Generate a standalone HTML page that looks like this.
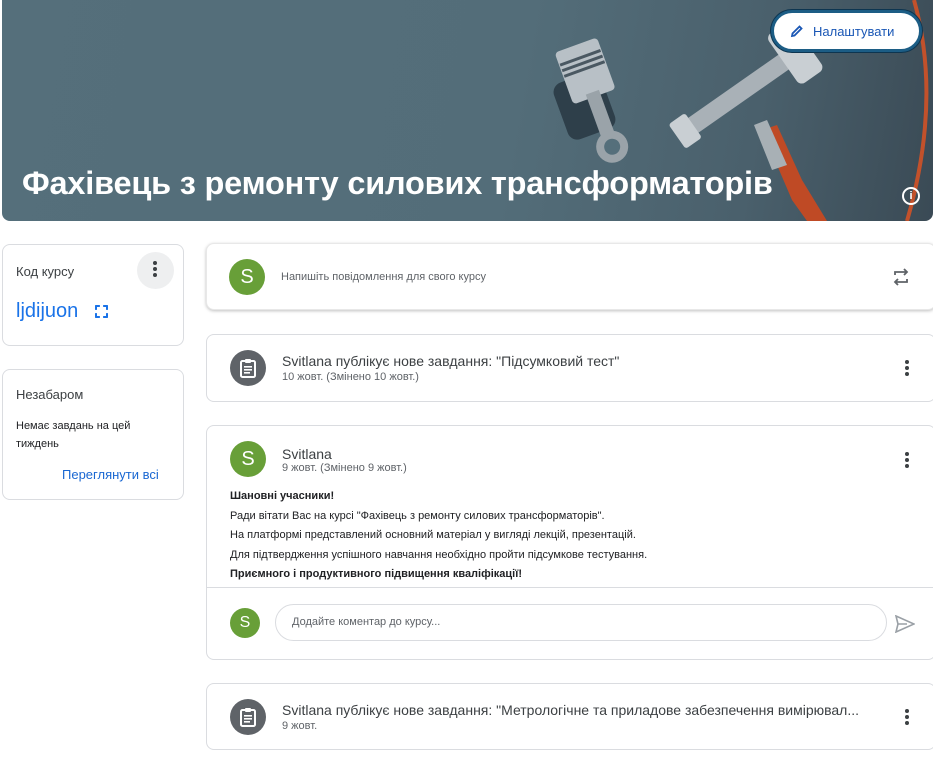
<!DOCTYPE html>
<html><head><meta charset="utf-8"><style>
*{box-sizing:border-box;margin:0;padding:0}
body{width:933px;height:767px;background:#fff;font-family:"Liberation Sans",Arial,sans-serif;color:#3c4043;position:relative;overflow:hidden}
.abs{position:absolute}
.card{position:absolute;background:#fff;border:1px solid #dadce0;border-radius:8px}
.av{position:absolute;width:36px;height:36px;border-radius:50%;background:#689f38;color:#fff;font-size:20px;text-align:center;line-height:36px}
.ic{position:absolute;width:36px;height:36px;border-radius:50%;background:#5f6368}
.dots{position:absolute;width:4px}
.dots i{display:block;width:4px;height:4px;border-radius:50%;background:#3c4043;margin-bottom:2px}
.t1{position:absolute;font-size:14px;color:#3c4043}
.t2{position:absolute;font-size:11px;color:#5f6368}
</style></head><body>
<div class="abs" style="left:2px;top:0;width:931px;height:221px;border-radius:0 0 8px 8px;overflow:hidden;background:linear-gradient(100deg,#556f7b 0%,#536d79 55%,#4a606c 80%,#3a4a55 100%)">
<svg width="931" height="221" style="position:absolute;left:0;top:0">
<g transform="rotate(-20 600 110)">
<rect x="560" y="70" width="50" height="60" rx="10" fill="#2e3f4a"/>
<rect x="575" y="40" width="45" height="55" rx="4" fill="#b8c0c6"/>
<rect x="576" y="52" width="43" height="3" fill="#4a5862"/><rect x="576" y="58" width="43" height="3" fill="#4a5862"/><rect x="576" y="64" width="43" height="3" fill="#4a5862"/>
<rect x="590" y="90" width="14" height="50" fill="#9aa3a9"/>
<circle cx="597" cy="148" r="16" fill="#9aa3a9"/><circle cx="597" cy="148" r="8" fill="#556f7b"/>
</g>
<g transform="rotate(-35 740 90)">
<rect x="670" y="82" width="140" height="18" rx="3" fill="#a9b1b7"/>
<rect x="790" y="60" width="30" height="60" rx="6" fill="#c9cfd3"/>
<rect x="660" y="76" width="20" height="30" rx="3" fill="#c9cfd3"/>
</g>
<path d="M760 130 L790 200 L805 221 L825 221 L800 180 L775 125Z" fill="#bf4a25"/>
<path d="M752 125 L770 170 L785 165 L765 120Z" fill="#a8b0b5"/>
<path d="M912 0 Q940 100 905 221" stroke="#c2512b" stroke-width="4" fill="none"/>
</svg>
<div class="abs" style="left:20px;top:165px;font-size:32.5px;font-weight:bold;color:#fff;letter-spacing:-0.2px">Фахівець з ремонту силових трансформаторів</div>
<div class="abs" style="left:900px;top:187px;width:18px;height:18px;border:2px solid #fff;border-radius:50%;color:#fff;font-size:11px;font-weight:bold;text-align:center;line-height:14px">i</div>
</div>
<div class="abs" style="left:771px;top:10px;width:151px;height:42px;border-radius:21px;background:#fff;border:3px solid #1c5d85;box-shadow:0 0 0 1px #0d3550"></div>
<svg class="abs" style="left:790px;top:24px" width="14" height="14"><path d="M2 12 L2.5 9.5 L9.5 2.5 L11.5 4.5 L4.5 11.5Z" fill="none" stroke="#1a57b5" stroke-width="1.8"/></svg>
<div class="abs" style="left:813px;top:24px;font-size:13px;color:#1a57b5">Налаштувати</div>

<div class="card" style="left:2px;top:244px;width:182px;height:102px"></div>
<div class="t1" style="left:16px;top:264px;font-size:13px">Код курсу</div>
<div class="abs" style="left:137px;top:252px;width:37px;height:37px;border-radius:50%;background:#eeeff0"></div>
<div class="dots" style="left:153px;top:261px"><i></i><i></i><i></i></div>
<div class="abs" style="left:16px;top:300px;font-size:20px;color:#1a73e8">ljdijuon</div>
<div class="abs" style="left:95px;top:305px;width:13px;height:13px;border:2px dashed #1a73e8;border-radius:1px"></div>

<div class="card" style="left:2px;top:369px;width:182px;height:131px"></div>
<div class="t1" style="left:16px;top:387px;font-size:13px">Незабаром</div>
<div class="abs" style="left:16px;top:417px;font-size:11px;line-height:18px;color:#202124;width:150px">Немає завдань на цей тиждень</div>
<div class="abs" style="left:62px;top:467px;font-size:13px;color:#1967d2">Переглянути всі</div>

<div class="card" style="left:206px;top:243px;width:730px;height:67px;border-color:#e8e8e8;box-shadow:0 1px 3px rgba(0,0,0,.25)"></div>
<div class="av" style="left:229px;top:259px">S</div>
<div class="t2" style="left:281px;top:271px">Напишіть повідомлення для свого курсу</div>
<svg class="abs" style="left:892px;top:268px" width="18" height="18"><path d="M3 7 V4 H15 M12 1 L15 4 L12 7 M15 11 V14 H3 M6 11 L3 14 L6 17" fill="none" stroke="#5f6368" stroke-width="1.8"/></svg>

<div class="card" style="left:206px;top:334px;width:730px;height:68px"></div>
<div class="ic" style="left:230px;top:350px"></div>
<svg class="abs" style="left:239px;top:358px" width="18" height="20"><rect x="2" y="3" width="14" height="16" rx="1.5" fill="none" stroke="#fff" stroke-width="2"/><rect x="6" y="1" width="6" height="4" rx="1" fill="#fff"/><rect x="5" y="8" width="8" height="1.6" fill="#fff"/><rect x="5" y="11" width="8" height="1.6" fill="#fff"/><rect x="5" y="14" width="6" height="1.6" fill="#fff"/></svg>
<div class="t1" style="left:282px;top:353px">Svitlana публікує нове завдання: "Підсумковий тест"</div>
<div class="t2" style="left:282px;top:371px">10 жовт. (Змінено 10 жовт.)</div>
<div class="dots" style="left:905px;top:360px"><i></i><i></i><i></i></div>

<div class="card" style="left:206px;top:425px;width:730px;height:235px"></div>
<div class="av" style="left:230px;top:441px">S</div>
<div class="t1" style="left:282px;top:446px">Svitlana</div>
<div class="t2" style="left:282px;top:462px">9 жовт. (Змінено 9 жовт.)</div>
<div class="dots" style="left:905px;top:452px"><i></i><i></i><i></i></div>
<div class="abs" style="left:230px;top:487px;font-size:11px;line-height:19.5px;color:#202124">
<b>Шановні учасники!</b><br>Ради вітати Вас на курсі "Фахівець з ремонту силових трансформаторів".<br>На платформі представлений основний матеріал у вигляді лекцій, презентацій.<br>Для підтвердження успішного навчання необхідно пройти підсумкове тестування.<br><b>Приємного і продуктивного підвищення кваліфікації!</b></div>
<div class="abs" style="left:207px;top:587px;width:726px;height:1px;background:#dadce0"></div>
<div class="av" style="left:230px;top:608px;width:30px;height:30px;line-height:30px;font-size:16px">S</div>
<div class="abs" style="left:275px;top:604px;width:612px;height:37px;border:1px solid #dadce0;border-radius:19px"></div>
<div class="t2" style="left:292px;top:616px;color:#5f6368">Додайте коментар до курсу...</div>
<svg class="abs" style="left:895px;top:615px" width="20" height="18"><path d="M1 1 L19 9 L1 17 L3 9Z M3 9 H12" fill="none" stroke="#9aa0a6" stroke-width="1.6"/></svg>

<div class="card" style="left:206px;top:683px;width:730px;height:67px"></div>
<div class="ic" style="left:230px;top:699px"></div>
<svg class="abs" style="left:239px;top:707px" width="18" height="20"><rect x="2" y="3" width="14" height="16" rx="1.5" fill="none" stroke="#fff" stroke-width="2"/><rect x="6" y="1" width="6" height="4" rx="1" fill="#fff"/><rect x="5" y="8" width="8" height="1.6" fill="#fff"/><rect x="5" y="11" width="8" height="1.6" fill="#fff"/><rect x="5" y="14" width="6" height="1.6" fill="#fff"/></svg>
<div class="t1" style="left:282px;top:702px">Svitlana публікує нове завдання: "Метрологічне та приладове забезпечення вимірювал...</div>
<div class="t2" style="left:282px;top:720px">9 жовт.</div>
<div class="dots" style="left:905px;top:709px"><i></i><i></i><i></i></div>
</body></html>
